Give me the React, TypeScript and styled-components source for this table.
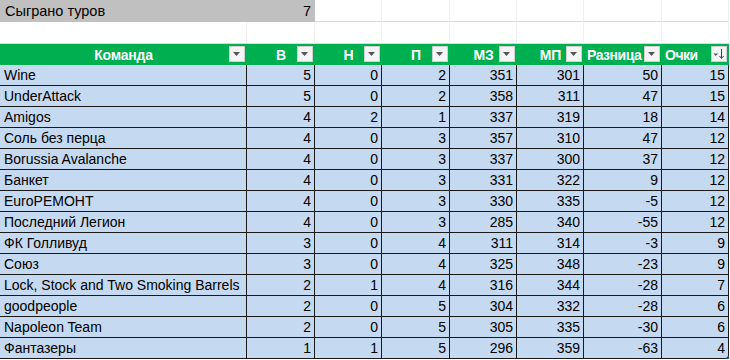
import React from "react";
import styled, { createGlobalStyle } from "styled-components";

const GlobalStyle = createGlobalStyle`
  html, body {
    margin: 0;
    padding: 0;
    background: #ffffff;
  }
  body {
    font-family: "Liberation Sans", Arial, sans-serif;
    color: #000;
  }
`;

const COLS = "247px 68px 67px 68px 67px 67px 78px 67px";

type Team = [string, number, number, number, number, number, number, number];

const teams: Team[] = [
  ["Wine", 5, 0, 2, 351, 301, 50, 15],
  ["UnderAttack", 5, 0, 2, 358, 311, 47, 15],
  ["Amigos", 4, 2, 1, 337, 319, 18, 14],
  ["Соль без перца", 4, 0, 3, 357, 310, 47, 12],
  ["Borussia Avalanche", 4, 0, 3, 337, 300, 37, 12],
  ["Банкет", 4, 0, 3, 331, 322, 9, 12],
  ["EuroРЕМОНТ", 4, 0, 3, 330, 335, -5, 12],
  ["Последний Легион", 4, 0, 3, 285, 340, -55, 12],
  ["ФК Голливуд", 3, 0, 4, 311, 314, -3, 9],
  ["Союз", 3, 0, 4, 325, 348, -23, 9],
  ["Lock, Stock and Two Smoking Barrels", 2, 1, 4, 316, 344, -28, 7],
  ["goodpeople", 2, 0, 5, 304, 332, -28, 6],
  ["Napoleon Team", 2, 0, 5, 305, 335, -30, 6],
  ["Фантазеры", 1, 1, 5, 296, 359, -63, 4],
];

const headers: { title: string; align: "center" | "left"; sort?: boolean }[] = [
  { title: "Команда", align: "center" },
  { title: "В", align: "center" },
  { title: "Н", align: "center" },
  { title: "П", align: "center" },
  { title: "МЗ", align: "center" },
  { title: "МП", align: "center" },
  { title: "Разница", align: "left" },
  { title: "Очки", align: "left", sort: true },
];

const Sheet = styled.div`
  position: relative;
  width: 730px;
  height: 360px;
  overflow: hidden;
  font-size: 14px;
`;

const Row = styled.div<{ $h?: number }>`
  display: grid;
  grid-template-columns: ${COLS};
  height: ${(p) => p.$h ?? 21}px;
`;

const InfoCell = styled.div<{ $right?: boolean }>`
  background: #c0c0c0;
  display: flex;
  align-items: center;
  justify-content: ${(p) => (p.$right ? "flex-end" : "flex-start")};
  padding: ${(p) => (p.$right ? "0 4px 0 0" : "0 0 0 5px")};
  font-size: 14.5px;
`;

const BlankCell = styled.div`
  box-sizing: border-box;
  border-bottom: 1px solid #dadada;
  border-right: 1px solid #f0f0f0;
`;

const HeadCell = styled.div<{ $align: "center" | "left" }>`
  position: relative;
  background: #00b050;
  color: #ffffff;
  font-weight: bold;
  font-size: 14px;
  letter-spacing: ${(p) => (p.$align === "left" ? "-0.5px" : "-0.2px")};
  display: flex;
  align-items: center;
  justify-content: ${(p) => (p.$align === "center" ? "center" : "flex-start")};
  padding: ${(p) => (p.$align === "center" ? "0" : "0 0 0 3px")};
  white-space: nowrap;
`;

const FilterButton = styled.div`
  position: absolute;
  right: 2px;
  top: 2px;
  width: 16px;
  height: 16px;
  box-sizing: border-box;
  background: #f5f5f5;
  border: 1px solid #d0d0d0;
  display: flex;
  align-items: center;
  justify-content: center;
`;

const DataCell = styled.div<{ $num?: boolean }>`
  box-sizing: border-box;
  background: #c5d9f1;
  border-right: 1px solid #1a1a1a;
  border-bottom: 1px solid #1a1a1a;
  display: flex;
  align-items: center;
  justify-content: ${(p) => (p.$num ? "flex-end" : "flex-start")};
  padding: ${(p) => (p.$num ? "0 3px 0 0" : "0 0 0 4px")};
  white-space: nowrap;
  overflow: hidden;
  font-size: 14px;
`;

const ResizeHandle = styled.div`
  position: absolute;
  left: 725px;
  top: 355px;
  width: 0;
  height: 0;
  border-left: 4px solid transparent;
  border-bottom: 4px solid #1f4e79;
`;

const Arrow = () => (
  <svg width="8" height="5" viewBox="0 0 8 5">
    <path d="M0 0 H7 L3.5 4 Z" fill="#555" />
  </svg>
);

const SortArrow = () => (
  <svg width="12" height="12" viewBox="0 0 12 12">
    <path d="M0.5 5.5 H5 L2.75 8 Z" fill="#555" />
    <path d="M8.5 1 V10" stroke="#444" strokeWidth="1" />
    <path d="M6.5 8 L8.5 10.5 L10.5 8" stroke="#444" strokeWidth="1" fill="none" />
  </svg>
);

export default function App() {
  return (
    <Sheet>
      <GlobalStyle />
      <Row $h={22}>
        <InfoCell>Сыграно туров</InfoCell>
        <InfoCell $right>7</InfoCell>
        {Array.from({ length: 6 }).map((_, i) => (
          <BlankCell key={i} />
        ))}
      </Row>
      <Row $h={22}>
        {Array.from({ length: 8 }).map((_, i) => (
          <BlankCell key={i} />
        ))}
      </Row>
      <Row $h={21}>
        {headers.map((h) => (
          <HeadCell key={h.title} $align={h.align}>
            {h.title}
            <FilterButton>{h.sort ? <SortArrow /> : <Arrow />}</FilterButton>
          </HeadCell>
        ))}
      </Row>
      {teams.map((t) => (
        <Row key={t[0]}>
          {t.map((v, i) => (
            <DataCell key={i} $num={i > 0}>
              {v}
            </DataCell>
          ))}
        </Row>
      ))}
      <ResizeHandle />
    </Sheet>
  );
}
